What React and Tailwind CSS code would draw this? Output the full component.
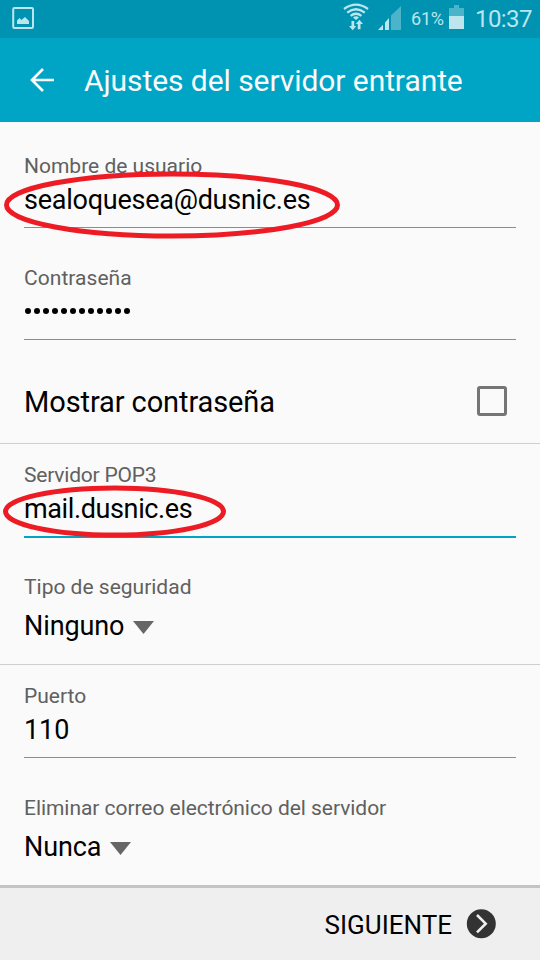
import React from "react";

function Label({ children, className = "" }) {
  return <div className={`h-7 whitespace-nowrap text-[21px] leading-7 text-[#606060] ${className}`}>{children}</div>;
}

function Value({ children, className = "tracking-[-0.1px]" }) {
  return <div className={`h-9 whitespace-nowrap text-[27px] leading-9 text-black ${className}`}>{children}</div>;
}

function Caret() {
  return (
    <svg className="mt-[3px] h-[13px] w-[21px]" viewBox="0 0 21 13">
      <path d="M0 0H21L10.5 13Z" fill="#666" />
    </svg>
  );
}

function StatusBar() {
  return (
    <div className="relative flex h-[38px] items-start bg-[#0093b1] text-[#bde5ed]">
      <svg className="ml-3 mt-[7px] h-[22px] w-[22px]" viewBox="0 0 22 22">
        <rect x="1.2" y="1" width="19.800" height="20" rx="1.200" fill="none" stroke="#bde5ed" strokeWidth="2" />
        <path d="M5 17V13.500L7.500 11L9.500 13L13 10L17 14V17Z" fill="#bde5ed" />
      </svg>
      <svg className="ml-[309px] mt-[3px] h-7 w-[26px]" viewBox="0 0 26 28" fill="none" stroke="#bde5ed" strokeWidth="2.3">
        <path d="M1 6Q13 -2.600 25 6M4.200 9.600Q13 2.800 21.800 9.600M7.600 12.800Q13 8.600 18.400 12.800" />
        <path d="M10 14.500Q13 11.800 16 14.500L13 17Z" fill="#bde5ed" stroke="none" />
        <path d="M8.500 18H11.200V23H13.200L9.700 27.200L6 23H8.500ZM14.800 26.200V21H12.800L16.400 16.700L20 21H17.500V26.200Z" fill="#bde5ed" stroke="none" />
      </svg>
      <svg className="ml-[9px] mt-[6px] h-6 w-6" viewBox="0 0 24 24">
        <path d="M7 16.500L11 12V24H7ZM0 24L5 18.700V24Z" fill="#bde5ed" />
        <path d="M13 9.500L23 0V24H13Z" fill="#4bb3ca" />
      </svg>
      <span className="ml-[9px] mt-[7px] w-[33px] whitespace-nowrap text-[18px] leading-6 tracking-[-0.2px]">61%</span>
      <svg className="ml-[5px] mt-[5px] h-6 w-[15px]" viewBox="0 0 15 24">
        <path d="M5 0H10V3H15V11H0V3H5Z" fill="#4bb3ca" />
        <path d="M0 11H15V24H0Z" fill="#bde5ed" />
      </svg>
      <span className="ml-[11px] mt-1 whitespace-nowrap text-[24px] leading-[30px] tracking-[-0.600px]">10:37</span>
    </div>
  );
}

export default function App() {
  return (
    <div className="relative flex h-[960px] w-[540px] flex-col overflow-hidden bg-[#fafafa] font-[Roboto,sans-serif]">
      <StatusBar />
      <header className="flex h-[84px] items-center bg-[#00a5c5] text-[#fafafa]">
        <svg className="ml-[30px] h-6 w-6" viewBox="0 0 24 24" fill="none" stroke="#fafafa" strokeWidth="2.700">
          <path d="M24 12H2M13 1L2 12L13 23" />
        </svg>
        <h1 className="ml-[30px] mt-px whitespace-nowrap text-[30px] leading-9 tracking-[-0.07px]">Ajustes del servidor entrante</h1>
      </header>

      <section className="flex h-[322px] flex-col border-b border-[#cecece]">
        <div className="mx-6 h-[106px] border-b border-[#8c8c8c] pt-[30px]">
          <Label>Nombre de usuario</Label>
          <Value className="mt-0.5 tracking-[-0.25px]">sealoquesea@dusnic.es</Value>
        </div>
        <div className="mx-6 h-28 border-b border-[#8c8c8c] pt-9">
          <Label className="tracking-[0.05px]">Contraseña</Label>
          <div className="mt-[16px] flex gap-[3px] pl-px">
            {Array.from({ length: 12 }, (_, i) => (
              <span key={i} className="h-1.5 w-1.5 rounded-full bg-black" />
            ))}
          </div>
        </div>
        <div className="ml-6 mr-[33px] flex h-[103px] items-start justify-between">
          <span className="mt-[42px] whitespace-nowrap text-[29px] leading-10 tracking-[-0.1px] text-black">Mostrar contraseña</span>
          <span className="mt-[46px] h-[30px] w-[30px] rounded-[3px] border-[3px] border-[#757575]" />
        </div>
      </section>

      <section className="flex h-[221px] flex-col border-b border-[#cecece]">
        <div className="mx-6 h-[94px] border-b-2 border-[#00a5c5] pt-[17px]">
          <Label className="tracking-[-0.2px]">Servidor POP3</Label>
          <Value className="mt-0.5 tracking-[-0.38px]">mail.dusnic.es</Value>
        </div>
        <div className="mx-6 pt-[35px]">
          <Label>Tipo de seguridad</Label>
          <div className="mt-[7px] flex items-center gap-[9px]">
            <Value>Ninguno</Value>
            <Caret />
          </div>
        </div>
      </section>

      <section className="flex h-[220px] flex-col">
        <div className="mx-6 h-[93px] border-b border-[#8c8c8c] pt-[17px]">
          <Label>Puerto</Label>
          <Value className="mt-0.5 tracking-[-0.1px]">110</Value>
        </div>
        <div className="mx-6 pt-9">
          <Label className="tracking-[-0.05px]">Eliminar correo electrónico del servidor</Label>
          <div className="mt-[7px] flex items-center gap-[9px]">
            <Value>Nunca</Value>
            <Caret />
          </div>
        </div>
      </section>

      <footer className="flex h-[75px] items-center justify-end border-t-[3px] border-[#c4c4c4] bg-[#efefef] pr-11">
        <span className="mt-[2px] whitespace-nowrap text-[26px] leading-9 text-black">SIGUIENTE</span>
        <svg className="ml-[14px] h-[30px] w-[30px]" viewBox="0 0 30 30">
          <circle cx="15.300" cy="14.700" r="14.500" fill="#333" />
          <path d="M11 6L19.700 14.700L11 23.400" fill="none" stroke="#f0f0f0" strokeWidth="2.600" />
        </svg>
      </footer>

      <svg className="pointer-events-none absolute left-0 top-0 h-[960px] w-[540px]" viewBox="0 0 540 960" fill="none" stroke="#ed1c24" strokeWidth="5">
        <ellipse cx="172" cy="205" rx="165.500" ry="31" />
        <ellipse cx="114.500" cy="511.500" rx="109" ry="23.500" />
      </svg>
    </div>
  );
}
